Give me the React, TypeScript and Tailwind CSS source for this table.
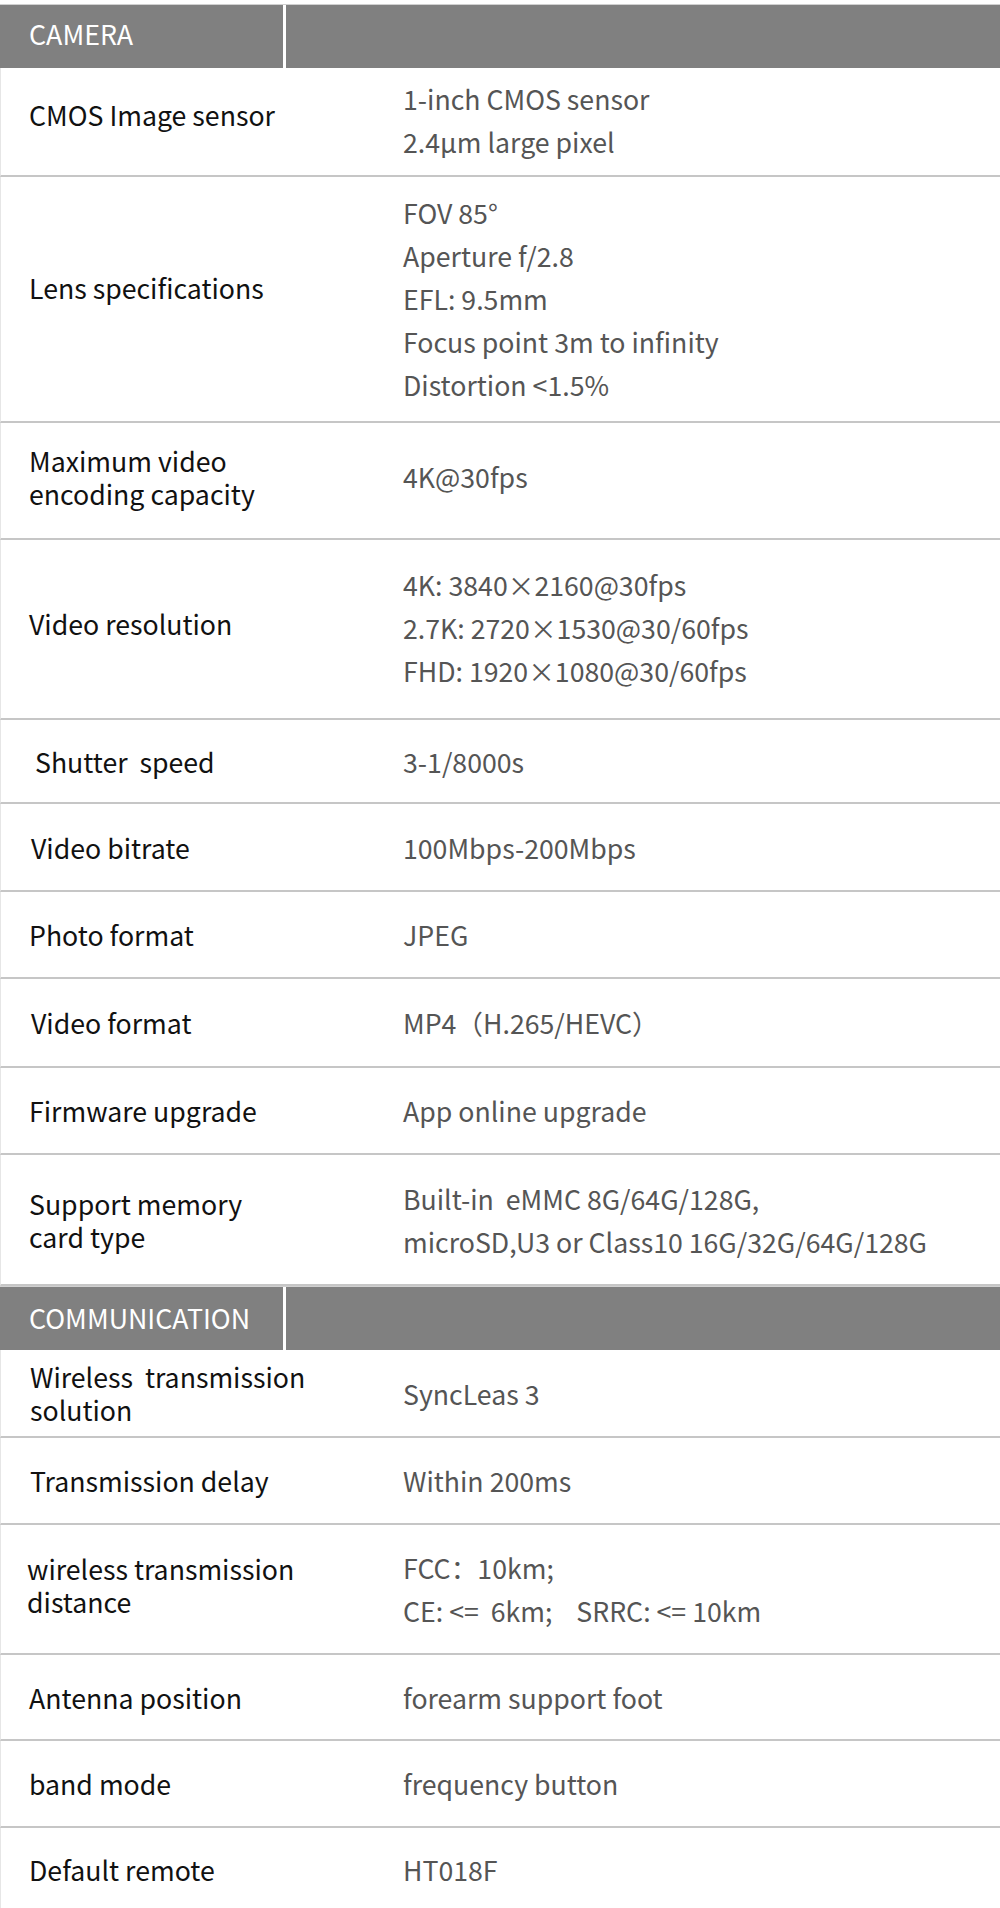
import React from "react";

type Row = {
  label: string[];
  values: string[];
  h: number;
  lp?: number; // label padding-left
  lo?: number; // label vertical offset (positive = up)
  vo?: number; // value vertical offset (positive = up)
};

const camera: Row[] = [
  { label: ["CMOS Image sensor"], values: ["1-inch CMOS sensor", "2.4μm large pixel"], h: 109, lo: 7, vo: 2 },
  {
    label: ["Lens specifications"],
    values: ["FOV 85°", "Aperture f/2.8", "EFL: 9.5mm", "Focus point 3m to infinity", "Distortion <1.5%"],
    h: 246,
    lo: 12,
    vo: 1,
  },
  { label: ["Maximum video", "encoding capacity"], values: ["4K@30fps"], h: 117, lo: 4, vo: 4 },
  {
    label: ["Video resolution"],
    values: ["4K: 3840×2160@30fps", "2.7K: 2720×1530@30/60fps", "FHD: 1920×1080@30/60fps"],
    h: 180,
    lo: 6,
    vo: 2,
  },
  { label: ["\u00a0Shutter\u00a0\u00a0speed"], values: ["3-1/8000s"], h: 84, lp: 29 },
  { label: ["Video bitrate"], values: ["100Mbps-200Mbps"], h: 88, lp: 31 },
  { label: ["Photo format"], values: ["JPEG"], h: 87 },
  { label: ["Video format"], values: ["MP4（H.265/HEVC）"], h: 89, lp: 31 },
  { label: ["Firmware upgrade"], values: ["App online upgrade"], h: 87 },
  {
    label: ["Support memory", "card type"],
    values: ["Built-in\u00a0 eMMC 8G/64G/128G,", "microSD,U3 or Class10 16G/32G/64G/128G"],
    h: 131,
  },
];

const comm: Row[] = [
  { label: ["Wireless\u00a0 transmission", "solution"], values: ["SyncLeas 3"], h: 88, lp: 30, lo: 0 },
  { label: ["Transmission delay"], values: ["Within 200ms"], h: 87, lp: 30 },
  {
    label: ["wireless transmission", "distance"],
    values: ["FCC：10km;", "CE: <=\u00a0 6km;\u00a0\u00a0\u00a0 SRRC: <= 10km"],
    h: 130,
    lp: 27,
    lo: 4,
  },
  { label: ["Antenna position"], values: ["forearm support foot"], h: 86 },
  { label: ["band mode"], values: ["frequency button"], h: 87 },
  { label: ["Default remote"], values: ["HT018F"], h: 82 },
];

function Header({ title, first }: { title: string; first?: boolean }) {
  return (
    <div className="flex h-[64px] bg-[#808080] border-t border-[#d0d0d0]">
      <div
        className={
          "w-[286px] border-r-[3px] border-white flex items-center pl-[29px] text-white text-[26.8px] " +
          (first ? "pb-[4px]" : "")
        }
      >
        {title}
      </div>
      <div className="flex-1" />
    </div>
  );
}

function Lines({ lines }: { lines: string[] }) {
  return (
    <p className="whitespace-pre">
      {lines.map((l, i) => (
        <React.Fragment key={i}>
          {i > 0 && <br />}
          {l}
        </React.Fragment>
      ))}
    </p>
  );
}

function SpecRow({ r, last }: { r: Row; last?: boolean }) {
  return (
    <div
      className={"flex border-l border-[#e6e6e6] " + (last ? "" : "border-b-2 border-b-[#c6c6c6]")}
      style={{ height: r.h }}
    >
      <div
        className="w-[402px] shrink-0 flex flex-col justify-center text-[#111111] text-[26.7px] leading-[33px]"
        style={{ paddingLeft: (r.lp ?? 29) - 1, paddingBottom: (r.lo ?? 0) * 2 }}
      >
        <Lines lines={r.label} />
      </div>
      <div
        className="flex-1 flex flex-col justify-center text-[#555555] text-[26.7px] leading-[43px]"
        style={{ paddingBottom: (r.vo ?? 0) * 2 }}
      >
        {r.values.map((v, i) => (
          <div key={i} className="whitespace-pre">
            {v}
          </div>
        ))}
      </div>
    </div>
  );
}

export default function App() {
  return (
    <div
      className="w-[1000px] h-[1908px] bg-white overflow-hidden pt-[4px]"
      style={{ fontFamily: "'Noto Sans CJK SC', 'Noto Sans', sans-serif" }}
    >
      <Header title="CAMERA" first />
      {camera.map((r, i) => (
        <SpecRow key={i} r={r} />
      ))}
      <Header title="COMMUNICATION" />
      {comm.map((r, i) => (
        <SpecRow key={i} r={r} last={i === comm.length - 1} />
      ))}
    </div>
  );
}
